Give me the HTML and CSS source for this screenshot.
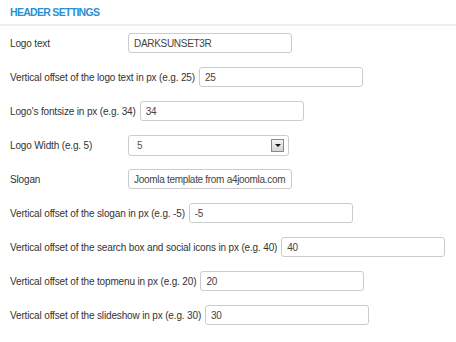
FILE: index.html
```html
<!DOCTYPE html>
<html lang="en">
<head>
    <meta charset="UTF-8">
    <title>Header Settings</title>
    <link rel="stylesheet" href="styles.css">
</head>
<body>
    <h3 class="section-title">HEADER SETTINGS</h3>
    <div class="settings">
        <div class="row">
            <label>Logo text</label>
            <input type="text" value="DARKSUNSET3R">
        </div>
        <div class="row">
            <label>Vertical offset of the logo text in px (e.g. 25)</label>
            <input type="text" value="25">
        </div>
        <div class="row">
            <label>Logo's fontsize in px (e.g. 34)</label>
            <input type="text" value="34">
        </div>
        <div class="row">
            <label>Logo Width (e.g. 5)</label>
            <div class="select">
                <span>5</span>
                <span class="select-btn"><span class="arrow"></span></span>
            </div>
        </div>
        <div class="row">
            <label>Slogan</label>
            <input type="text" value="Joomla template from a4joomla.com">
        </div>
        <div class="row">
            <label>Vertical offset of the slogan in px (e.g. -5)</label>
            <input type="text" value="-5">
        </div>
        <div class="row">
            <label>Vertical offset of the search box and social icons in px (e.g. 40)</label>
            <input type="text" value="40">
        </div>
        <div class="row">
            <label>Vertical offset of the topmenu in px (e.g. 20)</label>
            <input type="text" value="20">
        </div>
        <div class="row">
            <label>Vertical offset of the slideshow in px (e.g. 30)</label>
            <input type="text" value="30">
        </div>
    </div>
</body>
</html>
```

FILE: styles.css
```css
body {
    margin: 0;
    background-color: white;
    font-family: 'Liberation Sans', Arial, sans-serif;
    font-size: 10px;
    letter-spacing: -0.15px;
    color: #333;
}

.section-title {
    margin: 0;
    padding: 6px 10px 6px;
    font-size: 10.5px;
    letter-spacing: -0.7px;
    font-weight: bold;
    color: #2a8fd3;
    border-bottom: 2px solid #eee;
}

.settings {
    padding: 7px 10px 0;
}

.row {
    display: flex;
    align-items: center;
    height: 20px;
    margin-bottom: 14px;
}

.row label {
    flex-shrink: 0;
    min-width: 114px;
    margin-right: 4px;
    white-space: nowrap;
}

.row input {
    flex-shrink: 0;
    box-sizing: border-box;
    width: 164px;
    height: 20px;
    padding: 0 3px 0 5px;
    border: 1px solid #ccc;
    border-radius: 3px;
    font-family: inherit;
    font-size: 10px;
    letter-spacing: -0.3px;
    color: #444;
    outline: none;
}

.select {
    flex-shrink: 0;
    box-sizing: border-box;
    display: flex;
    align-items: center;
    justify-content: space-between;
    width: 161px;
    height: 21px;
    padding: 0 4px 0 8px;
    border: 1px solid #ccc;
    border-radius: 3px;
    color: #555;
}

.select-btn {
    box-sizing: border-box;
    display: flex;
    align-items: center;
    justify-content: center;
    width: 13px;
    height: 13px;
    border: 1px solid #888;
    background: linear-gradient(#f4f4f4, #d4d4d4);
}

.arrow {
    width: 0;
    height: 0;
    border-left: 3px solid transparent;
    border-right: 3px solid transparent;
    border-top: 3px solid #111;
}
```
